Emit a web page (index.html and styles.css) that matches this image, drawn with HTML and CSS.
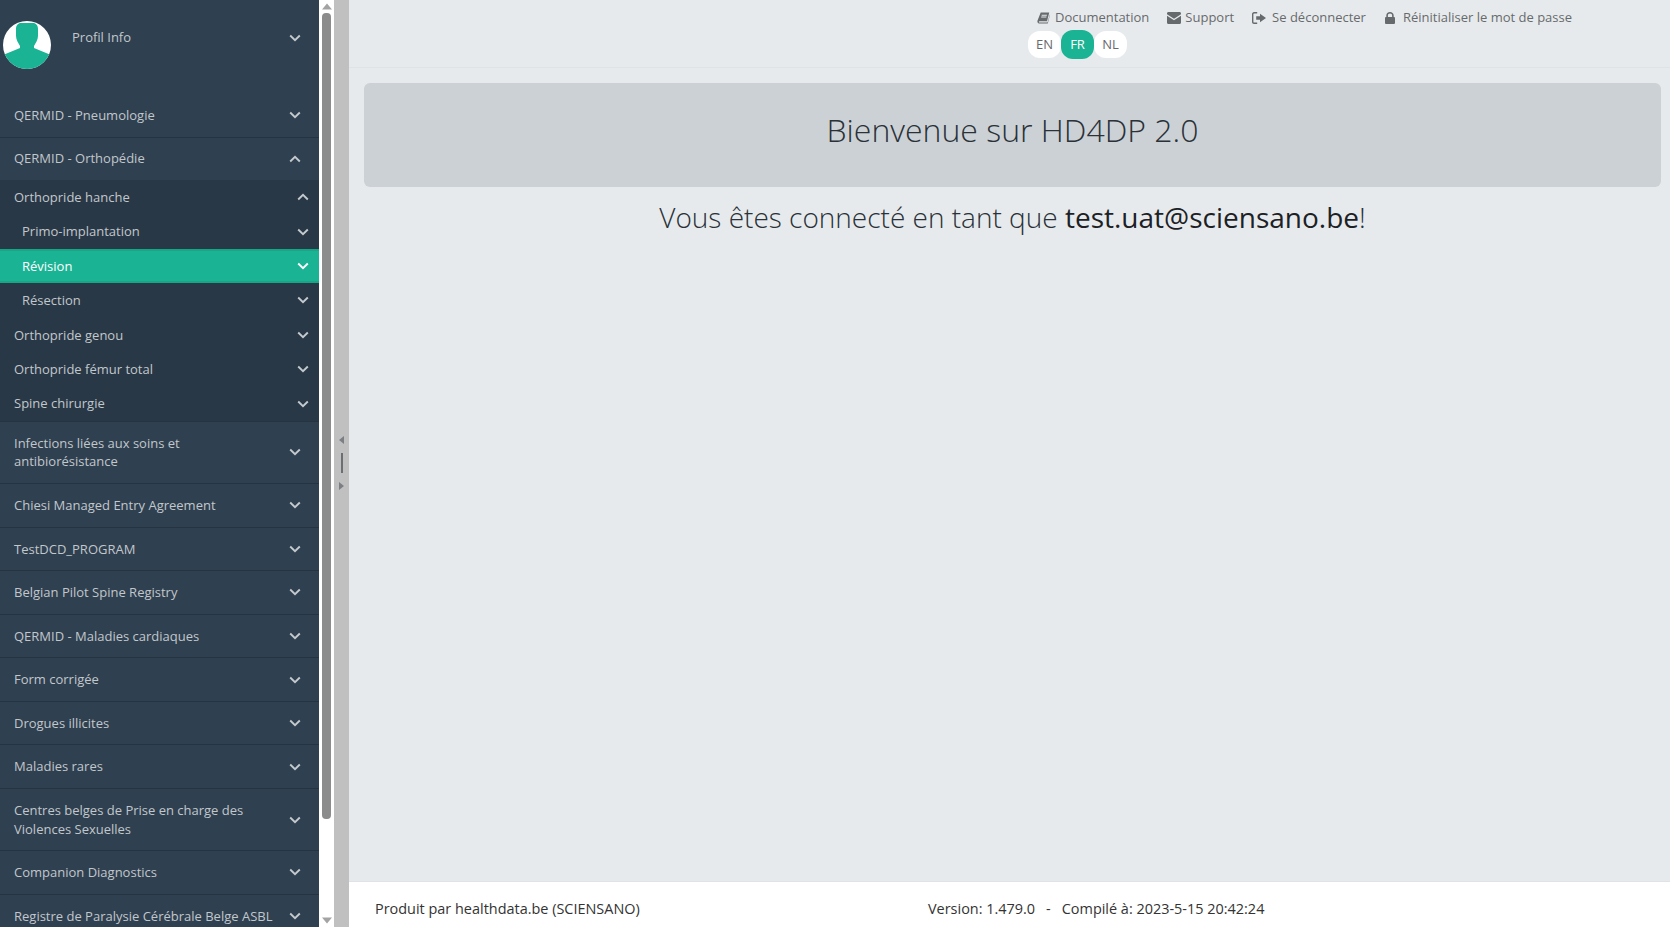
FILE: index.html
```html
<!DOCTYPE html>
<html lang="fr">
<head>
<meta charset="utf-8">
<title>HD4DP 2.0</title>
<link rel="stylesheet" href="styles.css">
</head>
<body>
<svg class="defs" width="0" height="0" aria-hidden="true">
  <defs>
    <symbol id="down" viewBox="0 0 12 8"><path d="M1.2 1.500 6 6.200l4.800-4.700" fill="none" stroke="currentColor" stroke-width="1.900"/></symbol>
    <symbol id="up" viewBox="0 0 12 8"><path d="M1.200 6.500 6 1.800l4.800 4.700" fill="none" stroke="currentColor" stroke-width="1.900"/></symbol>
  </defs>
</svg>
<div class="app">
  <nav class="sidebar">
    <div class="menu">
      <div class="profile">
        <svg class="avatar" viewBox="0 0 48 48">
          <defs><clipPath id="avatar-clip"><circle cx="24" cy="24" r="24"/></clipPath></defs>
          <circle cx="24" cy="24" r="24" fill="#fff"/>
          <path clip-path="url(#avatar-clip)" fill="#1ab394" d="M18 2h12c3 0 5 2.500 5 6v7c0 4-2.500 7-4 10v2l17 7v14H0V34l17-7v-2c-1.500-3-4-6-4-10V8c0-3.500 2-6 5-6z"/>
        </svg>
        <span class="profile-name">Profil Info</span>
        <svg class="chev"><use href="#down"/></svg>
      </div>
      <a class="item">QERMID - Pneumologie<svg class="chev"><use href="#down"/></svg></a>
      <a class="item open">QERMID - Orthopédie<svg class="chev"><use href="#up"/></svg></a>
      <div class="sub">
        <a class="sub-item">Orthopride hanche<svg class="chev"><use href="#up"/></svg></a>
        <a class="sub-item deep">Primo-implantation<svg class="chev"><use href="#down"/></svg></a>
        <a class="sub-item deep active">Révision<svg class="chev"><use href="#down"/></svg></a>
        <a class="sub-item deep">Résection<svg class="chev"><use href="#down"/></svg></a>
        <a class="sub-item">Orthopride genou<svg class="chev"><use href="#down"/></svg></a>
        <a class="sub-item">Orthopride fémur total<svg class="chev"><use href="#down"/></svg></a>
        <a class="sub-item">Spine chirurgie<svg class="chev"><use href="#down"/></svg></a>
      </div>
      <a class="item"><span class="label">Infections liées aux soins et antibiorésistance</span><svg class="chev"><use href="#down"/></svg></a>
      <a class="item">Chiesi Managed Entry Agreement<svg class="chev"><use href="#down"/></svg></a>
      <a class="item">TestDCD_PROGRAM<svg class="chev"><use href="#down"/></svg></a>
      <a class="item">Belgian Pilot Spine Registry<svg class="chev"><use href="#down"/></svg></a>
      <a class="item">QERMID - Maladies cardiaques<svg class="chev"><use href="#down"/></svg></a>
      <a class="item">Form corrigée<svg class="chev"><use href="#down"/></svg></a>
      <a class="item">Drogues illicites<svg class="chev"><use href="#down"/></svg></a>
      <a class="item">Maladies rares<svg class="chev"><use href="#down"/></svg></a>
      <a class="item"><span class="label">Centres belges de Prise en charge des Violences Sexuelles</span><svg class="chev"><use href="#down"/></svg></a>
      <a class="item">Companion Diagnostics<svg class="chev"><use href="#down"/></svg></a>
      <a class="item">Registre de Paralysie Cérébrale Belge ASBL<svg class="chev"><use href="#down"/></svg></a>
    </div>
    <div class="scrollbar">
      <svg class="arrow" viewBox="0 0 16 12"><path d="M8 3 13 9H3z" fill="#a3a3a3"/></svg>
      <div class="thumb-track"><div class="thumb"></div></div>
      <svg class="arrow" viewBox="0 0 16 12"><path d="M8 9 3 3h10z" fill="#a3a3a3"/></svg>
    </div>
  </nav>
  <div class="splitter">
    <svg class="split-arrow" viewBox="0 0 6 8"><path d="M5 0v8L0 4z" fill="#7b7f84"/></svg>
    <span class="split-bar"></span>
    <svg class="split-arrow" viewBox="0 0 6 8"><path d="M0 0v8l5-4z" fill="#7b7f84"/></svg>
  </div>
  <div class="main">
    <header class="topbar">
      <div class="links">
        <a class="link link-doc">
          <svg class="icon" viewBox="0 0 14 14"><path fill="currentColor" d="M4 1.500h9.200L10.800 11H2.700c-.9 0-1 1.500 0 1.500h8.700l2.400-9v1L11.600 13.400H2.400C.8 13.400 0 12 .6 10.300zM5 4v1h5.500l.3-1zM4.500 6v1H10l.3-1z"/></svg>
          Documentation</a>
        <a class="link link-support">
          <svg class="icon icon-wide" viewBox="0 0 14 12"><path fill="currentColor" d="M0 2.200V1.500C0 .7.600 0 1.400 0h11.200c.8 0 1.400.7 1.400 1.500v.7L7 6.800zM0 3.700l7 4.600 7-4.600v6.800c0 .8-.6 1.500-1.400 1.500H1.400C.6 12 0 11.300 0 10.500z"/></svg>
          Support</a>
        <a class="link link-out">
          <svg class="icon icon-wide" viewBox="0 0 14 12"><path fill="currentColor" d="M2 0h3.200v1.400H2.300c-.6 0-.9.400-.9.900v7.400c0 .5.300.9.900.9h2.900V12H2C.9 12 0 11 0 10V2C0 1 .9 0 2 0zM8 1.700 14 6l-6 4.300V7.700H4.200V4.300H8z"/></svg>
          Se déconnecter</a>
        <a class="link">
          <svg class="icon icon-lock" viewBox="0 0 10 12"><path fill="currentColor" d="M2.900 5h4.200V3.400C7.100 2.200 6.200 1.500 5 1.500S2.900 2.200 2.900 3.400zM1.300 5V3.400C1.300 1.400 3 0 5 0s3.700 1.400 3.700 3.400V5h.4c.5 0 .9.400.9.900v5.200c0 .5-.4.900-.9.900H.9c-.5 0-.9-.4-.9-.9V5.900C0 5.400.4 5 .9 5z"/></svg>
          Réinitialiser le mot de passe</a>
      </div>
      <div class="langs">
        <span class="lang">EN</span>
        <span class="lang lang-active">FR</span>
        <span class="lang">NL</span>
      </div>
    </header>
    <section class="content">
      <div class="banner"><h1 class="banner-title">Bienvenue sur HD4DP 2.0</h1></div>
      <h2 class="welcome">Vous êtes connecté en tant que <strong class="user">test.uat@sciensano.be</strong>!</h2>
    </section>
    <footer class="footer">
      <span class="credit">Produit par healthdata.be (SCIENSANO)</span>
      <span class="version">Version: 1.479.0<span class="sep">-</span>Compilé à: 2023-5-15 20:42:24</span>
    </footer>
  </div>
</div>
</body>
</html>
```
FILE: styles.css
```css
* { box-sizing: border-box; }
html, body { height: 100%; margin: 0; overflow: hidden; }
body { font-family: "Open Sans", "Noto Sans", sans-serif; font-size: 13px; line-height: 18.57px; color: #676a6c; }
.defs { position: absolute; }
.app { display: flex; height: 927px; }

.sidebar { display: flex; width: 334px; flex: none; background: #fff; }
.menu { width: 319px; flex: none; background: #2f4050; color: #c2c7cc; overflow: hidden; }
.profile { display: flex; align-items: center; height: 94px; padding: 0 18px 19px 3px; }
.avatar { width: 48px; height: 48px; flex: none; margin-top: 15px; }
.profile-name { flex: 1; margin: -1px 0 0 21px; }
.chev { width: 12px; height: 8px; flex: none; display: block; color: #c4c9cd; }

.item { display: flex; align-items: center; justify-content: space-between; padding: 12px 18px 12px 14px; border-bottom: 1px solid #263442; }
.item.open { border-bottom: 0; height: 42.4px; }
.label { width: 245px; }
.sub { background: #293846; border-bottom: 1px solid #263442; }
.sub-item { display: flex; align-items: center; justify-content: space-between; height: 34.43px; padding: 0 10px 0 14px; }
.sub-item.deep { padding-left: 22px; }
.sub-item.active { background: #1ab394; color: #fff; border-top: 2px solid #18a689; border-bottom: 2px solid #18a689; }
.sub-item.active .chev { color: #fff; }

.scrollbar { width: 15px; padding: 0 3px; flex: none; display: flex; flex-direction: column; }
.arrow { width: 16px; height: 13px; margin: 0 -3px; flex: none; }
.thumb-track { flex: 1; }
.thumb { width: 9px; height: 806px; background: #8c8c8c; border-radius: 4px; }

.splitter { width: 15px; flex: none; background: #c0c0c0; display: flex; flex-direction: column; align-items: center; justify-content: center; gap: 9px; padding-bottom: 1px; }
.split-arrow { width: 6px; height: 8px; }
.split-bar { width: 2px; height: 20px; background: #6b6f73; }

.main { flex: 1; display: flex; flex-direction: column; background: #e7eaec; min-width: 0; }
.topbar { height: 68px; border-bottom: 1px solid #dfe3e6; padding: 6px 0 0 679px; flex: none; }
.links { display: flex; padding-left: 9px; height: 23px; align-items: center; color: #676a6c; }
.link { display: flex; align-items: center; margin-right: 18px; white-space: nowrap; }
.icon { width: 13px; height: 13px; margin-right: 5px; flex: none; color: #676a6c; }
.icon-wide { width: 14px; height: 12px; margin-right: 4px; }
.icon-lock { width: 10px; height: 12px; margin-right: 8px; }
.link-out { margin-right: 19px; }
.link-out .icon { margin-right: 6px; }
.langs { display: flex; margin-top: 2px; }
.lang { width: 33px; height: 27px; display: flex; align-items: center; justify-content: center; background: #fff; border-radius: 12px; }
.lang-active { background: #1ab394; color: #fff; height: 29px; margin-top: -1px; }

.content { flex: 1; padding: 15px 9px 0 15px; text-align: center; color: #2f3a44; }
.banner { height: 104px; background: #ccd1d5; border-radius: 6px; padding-top: 24px; }
.banner-title { margin: 0; font-size: 32px; line-height: 46px; font-weight: 300; color: #2a3138; }
.welcome { margin: 11px 0 0; font-size: 28px; line-height: 38px; font-weight: 300; color: #2a3138; }
.user { font-weight: 400; color: #1c2126; }

.footer { height: 46px; flex: none; background: #fff; border-top: 1px solid #dfe3e6; display: flex; align-items: center; padding: 10px 0 0 26px; font-size: 14.45px; color: #333; }
.credit { width: 553px; flex: none; }
.sep { margin: 0 11px; }
```
